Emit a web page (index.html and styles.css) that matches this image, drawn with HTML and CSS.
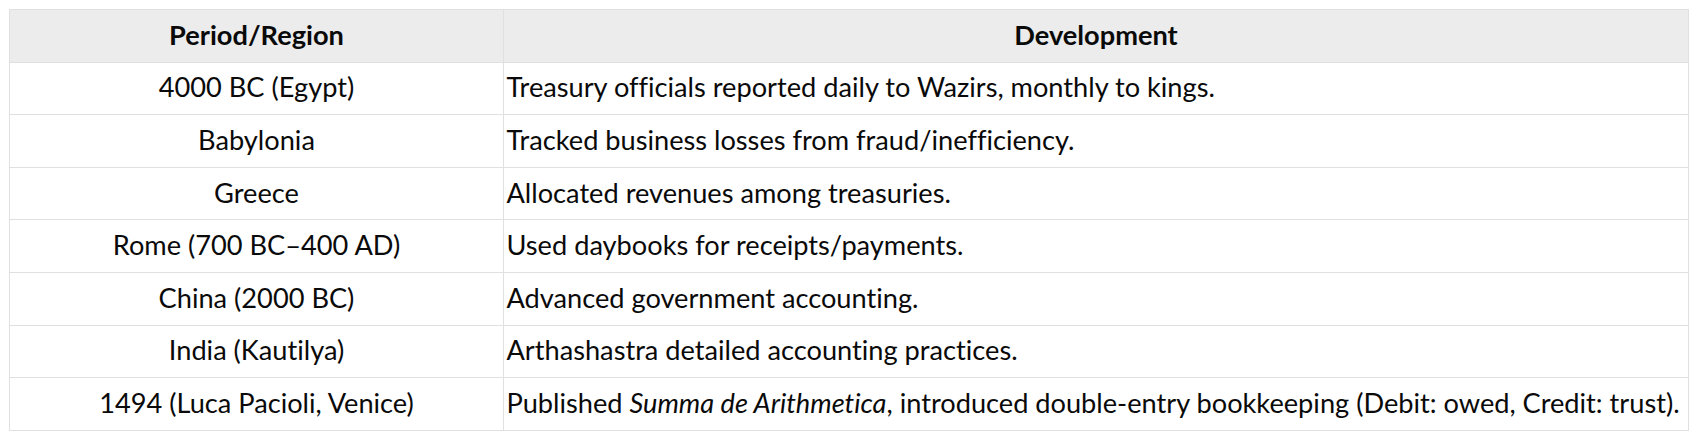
FILE: index.html
```html
<!DOCTYPE html>
<html>
<head>
<meta charset="utf-8">
<link rel="stylesheet" href="styles.css">
</head>
<body>
<table class="history">
  <thead>
    <tr><th class="period-col">Period/Region</th><th>Development</th></tr>
  </thead>
  <tbody>
    <tr><td class="period">4000 BC (Egypt)</td><td>Treasury officials reported daily to Wazirs, monthly to kings.</td></tr>
    <tr><td class="period">Babylonia</td><td>Tracked business losses from fraud/inefficiency.</td></tr>
    <tr><td class="period">Greece</td><td>Allocated revenues among treasuries.</td></tr>
    <tr><td class="period">Rome (700 BC–400 AD)</td><td>Used daybooks for receipts/payments.</td></tr>
    <tr><td class="period">China (2000 BC)</td><td>Advanced government accounting.</td></tr>
    <tr><td class="period">India (Kautilya)</td><td>Arthashastra detailed accounting practices.</td></tr>
    <tr><td class="period">1494 (Luca Pacioli, Venice)</td><td>Published <em>Summa de Arithmetica</em>, introduced double-entry bookkeeping (Debit: owed, Credit: trust).</td></tr>
  </tbody>
</table>
</body>
</html>
```
FILE: styles.css
```css
body {
  margin: 9px 8px 8px 9px;
  background: #ffffff;
  font-family: Lato, "Open Sans", sans-serif;
  color: #0a0a0a;
}
.history {
  width: 100%;
  border-collapse: collapse;
  font-size: 27.2px;
  line-height: 32.4px;
  font-variant-ligatures: none;
  font-feature-settings: "liga" 0, "clig" 0, "dlig" 0;
}
.history th,
.history td {
  border: 1px solid #e0e0e0;
  padding: 8.8px 2.5px 10.4px;
  text-align: left;
  white-space: nowrap;
}
.history th {
  background: #ececec;
  font-weight: 700;
  text-align: center;
}
.history th.period-col {
  width: 488px;
}
.history td.period {
  text-align: center;
}
```
